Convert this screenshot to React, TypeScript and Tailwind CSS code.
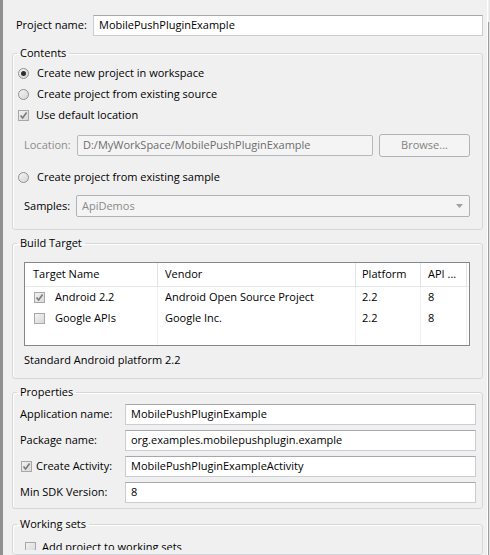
import type { ReactNode } from 'react';

const font = { fontFamily: '"Open Sans", "Noto Sans", sans-serif' };

function Radio({ checked = false }: { checked?: boolean }) {
    return (
        <span className="w-[11px] h-[11px] rounded-full border border-[#8e8f8f] bg-linear-to-br from-[#f4f4f4] to-[#d6d6d6] flex items-center justify-center shrink-0">
            {checked && <span className="w-[5px] h-[5px] rounded-full bg-[#2f2f2f]" />}
        </span>
    );
}

function Check({ checked = false, dim = false }: { checked?: boolean; dim?: boolean }) {
    return (
        <span
            className={`w-[11px] h-[11px] border ${dim ? 'border-[#a8a8a8]' : 'border-[#8e8f8f]'} bg-linear-to-br from-[#f2f2f2] to-[#d9d9d9] flex items-center justify-center shrink-0`}
        >
            {checked && (
                <svg width="9" height="9" viewBox="0 0 9 9">
                    <path d="M1.5 4.5 L3.6 7 L7.6 1.5" fill="none" stroke={dim ? '#7a7a7a' : '#4a4a4a'} strokeWidth="1.6" />
                </svg>
            )}
        </span>
    );
}

function Field({ value, className = '' }: { value: string; className?: string }) {
    return (
        <div className={`h-[21px] bg-white border border-[#c9ccd1] border-t-[#a6a8ad] flex items-center px-[5px] text-black ${className}`}>
            {value}
        </div>
    );
}

function Group({ title, children, className = '' }: { title: string; children: ReactNode; className?: string }) {
    return (
        <fieldset className={`ml-[9px] mr-[4px] border border-[#d5d8db] rounded-[3px] shadow-[inset_1px_1px_0_#fff] ${className}`}>
            <legend className="ml-[4px] px-[3px] leading-[16px] text-black">{title}</legend>
            {children}
        </fieldset>
    );
}

export default function App() {
    return (
        <div style={font} className="w-[490px] h-[555px] overflow-hidden bg-[#f0f0f0] flex text-[11px] text-black">
            <div className="w-[3px] bg-[#8f8f8f] shrink-0" />

            <div className="flex-1 flex flex-col">
                {/* Project name */}
                <div className="flex items-center pl-[13px] pr-[4px] pt-[15px]">
                    <span className="w-[77px] shrink-0">Project name:</span>
                    <Field value="MobilePushPluginExample" className="flex-1" />
                </div>

                {/* Contents */}
                <Group title="Contents" className="mt-[9px] pb-[12px]">
                    <div className="pt-[2px] pl-[5px]">
                        <div className="h-[21px] flex items-center gap-[8px]">
                            <Radio checked />
                            <span>Create new project in workspace</span>
                        </div>
                        <div className="h-[21px] flex items-center gap-[8px]">
                            <Radio />
                            <span>Create project from existing source</span>
                        </div>
                        <div className="h-[21px] flex items-center gap-[7px]">
                            <Check checked dim />
                            <span>Use default location</span>
                        </div>
                    </div>
                    <div className="mt-[8px] h-[23px] flex items-center pl-[11px] pr-[12px]">
                        <span className="w-[53px] shrink-0 text-[#8d8d8d]">Location:</span>
                        <div className="h-[21px] w-[296px] border border-[#b5b8bc] rounded-[2px] bg-[#f4f4f4] flex items-center px-[5px] text-[#6d6d6d]">
                            D:/MyWorkSpace/MobilePushPluginExample
                        </div>
                        <div className="ml-[6px] h-[23px] flex-1 border border-[#b0b3b6] rounded-[3px] bg-[#f4f4f4] flex items-center justify-center text-[#838383]">
                            Browse...
                        </div>
                    </div>
                    <div className="mt-[10px] h-[21px] flex items-center gap-[8px] pl-[5px]">
                        <Radio />
                        <span>Create project from existing sample</span>
                    </div>
                    <div className="mt-[7px] h-[22px] flex items-center pl-[11px] pr-[12px]">
                        <span className="w-[52px] shrink-0">Samples:</span>
                        <div className="h-[22px] flex-1 border border-[#b0b3b6] rounded-[2px] bg-[#f4f4f4] flex items-center justify-between pl-[5px] pr-[6px] text-[#8a8a8a]">
                            <span>ApiDemos</span>
                            <svg width="7" height="4" viewBox="0 0 7 4">
                                <path d="M0 0 H7 L3.5 4 Z" fill="#a0a0a0" />
                            </svg>
                        </div>
                    </div>
                </Group>

                {/* Build Target */}
                <Group title="Build Target" className="mt-[5px] pb-[10px]">
                    <div className="mt-[11px] ml-[11px] mr-[12px] h-[84px] border border-[#828790] bg-white flex flex-col">
                        <div className="h-[24px] grid grid-cols-[133px_198px_65px_46px_1fr] border-b border-[#e8e8e8] shrink-0">
                            <div className="flex items-center pl-[8px] border-r border-[#e3e3e3]">Target Name</div>
                            <div className="flex items-center pl-[7px] border-r border-[#e3e3e3]">Vendor</div>
                            <div className="flex items-center pl-[6px] border-r border-[#e3e3e3]">Platform</div>
                            <div className="flex items-center pl-[7px] border-r border-[#e3e3e3]">API ...</div>
                            <div />
                        </div>
                        <div className="flex-1 grid grid-cols-[133px_198px_65px_46px_1fr]">
                            <div className="border-r border-[#f0f0f0]">
                                <div className="h-[21px] flex items-center gap-[10px] pl-[9px]">
                                    <Check checked dim />
                                    <span>Android 2.2</span>
                                </div>
                                <div className="h-[21px] flex items-center gap-[10px] pl-[9px]">
                                    <Check dim />
                                    <span>Google APIs</span>
                                </div>
                            </div>
                            <div className="border-r border-[#f0f0f0] pl-[7px]">
                                <div className="h-[21px] flex items-center">Android Open Source Project</div>
                                <div className="h-[21px] flex items-center">Google Inc.</div>
                            </div>
                            <div className="border-r border-[#f0f0f0] pl-[6px]">
                                <div className="h-[21px] flex items-center">2.2</div>
                                <div className="h-[21px] flex items-center">2.2</div>
                            </div>
                            <div className="border-r border-[#f0f0f0] pl-[7px]">
                                <div className="h-[21px] flex items-center">8</div>
                                <div className="h-[21px] flex items-center">8</div>
                            </div>
                            <div />
                        </div>
                    </div>
                    <div className="mt-[6px] h-[16px] flex items-center pl-[11px]">Standard Android platform 2.2</div>
                </Group>

                {/* Properties */}
                <Group title="Properties" className="mt-[5px] pb-[5px]">
                    <div className="mt-[4px] flex flex-col gap-[5px] pl-[7px] pr-[6px]">
                        <div className="flex items-center">
                            <span className="w-[105px] shrink-0">Application name:</span>
                            <Field value="MobilePushPluginExample" className="flex-1" />
                        </div>
                        <div className="flex items-center">
                            <span className="w-[105px] shrink-0">Package name:</span>
                            <Field value="org.examples.mobilepushplugin.example" className="flex-1" />
                        </div>
                        <div className="flex items-center">
                            <span className="w-[105px] shrink-0 flex items-center gap-[4px] pl-[1px]">
                                <Check checked dim />
                                <span>Create Activity:</span>
                            </span>
                            <Field value="MobilePushPluginExampleActivity" className="flex-1" />
                        </div>
                        <div className="flex items-center">
                            <span className="w-[105px] shrink-0">Min SDK Version:</span>
                            <Field value="8" className="flex-1" />
                        </div>
                    </div>
                </Group>

                {/* Working sets */}
                <Group title="Working sets" className="mt-[7px] h-[60px]">
                    <div className="mt-[5px] h-[13px] overflow-hidden">
                        <div className="h-[21px] flex items-center gap-[6px] pl-[12px]">
                            <Check dim />
                            <span>Add project to working sets</span>
                        </div>
                    </div>
                </Group>
            </div>

            {/* right scroll edge */}
            <div className="w-[3px] shrink-0 flex">
                <div className="w-[1px] bg-white" />
                <div className="w-[1px] mt-[22px] bg-[#9a9a9a]" />
                <div className="w-[1px] bg-[#e6e6e6]" />
            </div>
        </div>
    );
}
